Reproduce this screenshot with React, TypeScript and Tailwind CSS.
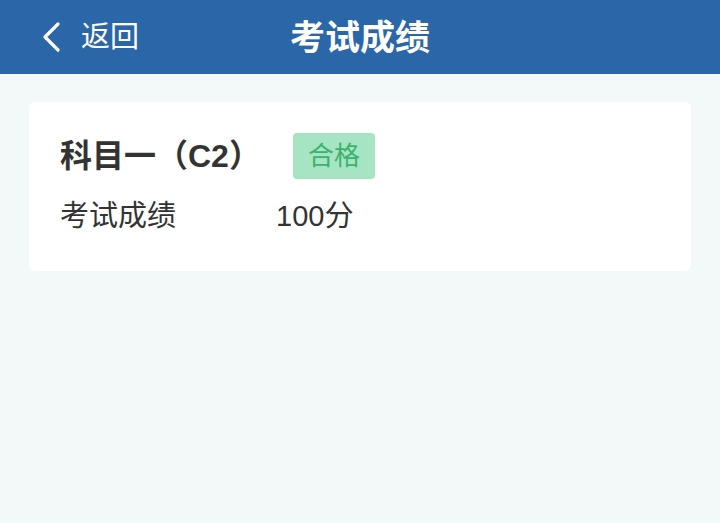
import React from 'react';

const App: React.FC = () => {
  return (
    <div
      className="w-[720px] h-[523px] bg-[#f3f8f9] overflow-hidden"
      style={{ fontFamily: '"Liberation Sans", "Noto Sans CJK SC", sans-serif' }}
    >
      <header className="relative h-[74px] bg-[#2a66a8] flex items-center justify-center">
        <button className="absolute left-[40px] top-0 h-full flex items-center gap-[19px] text-white">
          <svg width="22" height="32" viewBox="0 0 22 32" fill="none">
            <path d="M18 3 L5 16 L18 29" stroke="white" strokeWidth="3.2" strokeLinecap="round" strokeLinejoin="round" />
          </svg>
          <span className="text-[29px] leading-none">返回</span>
        </button>
        <h1 className="text-white text-[35px] font-bold leading-none">考试成绩</h1>
      </header>

      <div className="px-[29px] pt-[28px]">
        <div className="bg-white rounded-[6px] pl-[31px] pr-6 pt-[31px] pb-[40px]">
          <div className="flex items-center">
            <span className="text-[32px] font-bold text-[#333333] leading-none">科目一（C2）</span>
            <span className="ml-[32px] bg-[#a7e4c3] text-[#39b36d] text-[26px] leading-none rounded-[4px] px-[15px] py-[10px]">
              合格
            </span>
          </div>
          <div className="flex items-center mt-[23px] text-[29px] text-[#333333] leading-none">
            <span className="w-[216px]">考试成绩</span>
            <span>100分</span>
          </div>
        </div>
      </div>
    </div>
  );
};

export default App;
